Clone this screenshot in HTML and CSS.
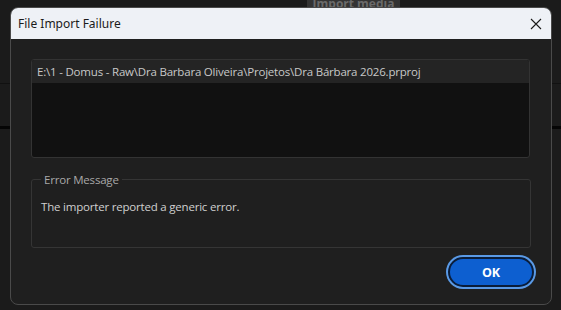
FILE: index.html
```html
<!DOCTYPE html>
<html lang="en">
<head>
    <meta charset="UTF-8"/>
    <title>File Import Failure</title>
    <link rel="stylesheet" href="styles.css">
</head>
<body>

<div class="app-top">
    <span class="app-button">Import media</span>
</div>

<div class="dialog">
    <div class="dialog-title">
        <span>File Import Failure</span>
        <svg class="close" width="12" height="12" viewBox="0 0 12 12">
            <path d="M1 1 L11 11 M11 1 L1 11" stroke="#1b1b1b" stroke-width="1.1" fill="none"/>
        </svg>
    </div>

    <div class="dialog-body">
        <div class="file-list">
            <div class="file-row">E:\1 - Domus - Raw\Dra Barbara Oliveira\Projetos\Dra Bárbara 2026.prproj</div>
        </div>

        <fieldset class="message">
            <legend>Error Message</legend>
            <p>The importer reported a generic error.</p>
        </fieldset>

        <div class="actions">
            <button class="ok">OK</button>
        </div>
    </div>
</div>

</body>
</html>
```

FILE: styles.css
```css
* {
    box-sizing: border-box;
}

body {
    margin: 0;
    width: 561px;
    height: 310px;
    overflow: hidden;
    font-family: 'Open Sans', sans-serif;
    background-color: #1b1b1b;
    background-image:
        linear-gradient(to bottom, transparent 83px, #111 83px, #111 84px, transparent 84px),
        linear-gradient(to bottom, transparent 126px, #050505 126px, #050505 129px, transparent 129px);
}

.app-top {
    height: 7px;
    position: relative;
}

/* button of the app behind the dialog, mostly hidden by it */
.app-button {
    position: absolute;
    left: 307px;
    top: 0;
    width: 93px;
    height: 7px;
    background: #333;
    color: #6a6a6a;
    font-size: 12px;
    font-weight: bold;
    line-height: 7px;
    text-align: center;
    overflow: hidden;
}

.dialog {
    margin-left: 10px;
    width: 542px;
    height: 298px;
    border: 1px solid #4a4a4a;
    border-radius: 8px;
    background: #1f1f1f;
    overflow: hidden;
    display: flex;
    flex-direction: column;
}

.dialog-title {
    height: 31px;
    background: #eef1f6;
    color: #1b1b1b;
    display: flex;
    align-items: center;
    justify-content: space-between;
    padding: 0 9px 0 7px;
    font-family: 'Noto Sans', sans-serif;
    font-size: 12px;
}

.dialog-body {
    padding: 20px 20px 0 20px;
}

.file-list {
    width: 499px;
    height: 99px;
    background: #111;
    border: 1px solid #333;
    border-radius: 3px;
    overflow: hidden;
}

.file-row {
    height: 23px;
    background: #242424;
    color: #c8c8c8;
    font-size: 11.5px;
    line-height: 23px;
    padding-left: 5px;
    letter-spacing: -0.2px;
}

.message {
    margin: 14px 0 0 0;
    width: 500px;
    height: 76px;
    border: 1px solid #353535;
    border-radius: 3px;
    padding: 0 9px;
}

.message legend {
    color: #a8a8a8;
    font-size: 11.5px;
    padding: 0 3px;
    margin-left: 0;
    letter-spacing: -0.2px;
}

.message p {
    margin: 12px 0 0 0;
    color: #d0d0d0;
    font-size: 11.5px;
    letter-spacing: -0.2px;
}

.actions {
    display: flex;
    justify-content: flex-end;
    padding: 9px 0 0 0;
    width: 503px;
}

.ok {
    width: 86px;
    height: 30px;
    border-radius: 15px;
    border: 2px solid #0a1d3a;
    box-shadow: 0 0 0 2px #5a9ae6;
    background: #0d5fd0;
    color: #fff;
    font-family: 'Open Sans', sans-serif;
    font-weight: bold;
    font-size: 12.5px;
}
```
